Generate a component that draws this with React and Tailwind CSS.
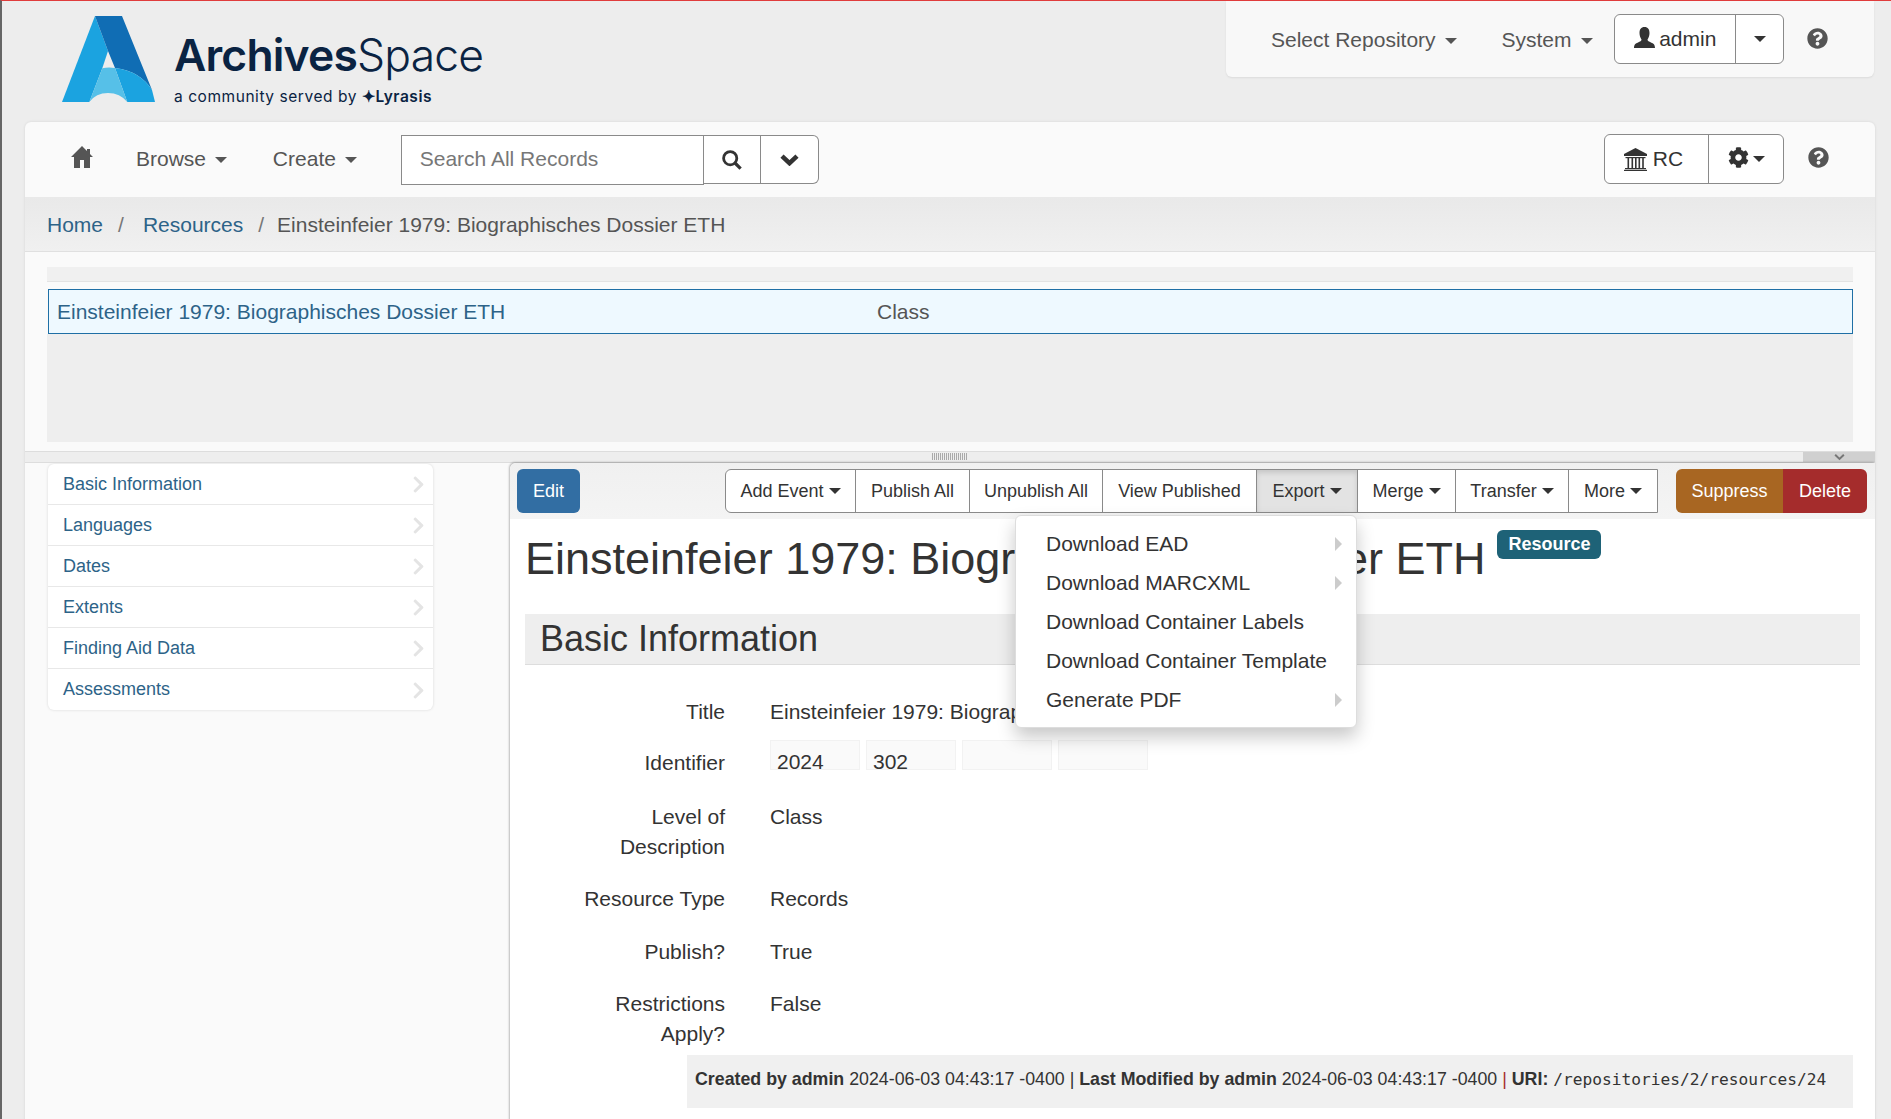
import React from "react";
import { FaChevronRight, FaQuestionCircle, FaCog } from "react-icons/fa";

const Caret = ({ className = "" }) => (
  <span className={"inline-block w-0 h-0 border-x-[6px] border-x-transparent border-t-[6px] border-t-current align-middle " + className} />
);

const HomeIcon = () => (
  <svg width="22" height="22" viewBox="0 0 22 22" className="shrink-0" fill="#555">
    <path d="M0 11 L11 0 L16 5 L16 3 L19 3 L19 8 L22 11 L19 11 L19 22 L13 22 L13 14 L9 14 L9 22 L3 22 L3 11 Z" />
  </svg>
);

const UserIcon = () => (
  <svg width="21" height="21" viewBox="0 0 21 21" className="shrink-0 mb-[3px]" fill="#333">
    <path d="M10.5 0 C14 0 15.5 2.5 15.5 6 C15.5 9 14.5 11 13.5 12.5 C13.5 14 15 14.6 17 15.4 C19.5 16.4 21 17.5 21 21 L0 21 C0 17.5 1.5 16.4 4 15.4 C6 14.6 7.5 14 7.5 12.5 C6.5 11 5.5 9 5.5 6 C5.5 2.5 7 0 10.5 0 Z" />
  </svg>
);

const BankIcon = () => (
  <svg width="23" height="23" viewBox="0 0 23 23" className="shrink-0" fill="#333">
    <path d="M11.5 0 L23 6 L23 8 L0 8 L0 6 Z" />
    <rect x="1.5" y="9" width="20" height="1.2" />
    <rect x="3.5" y="10" width="1.6" height="10" />
    <rect x="7.5" y="10" width="1.6" height="10" />
    <rect x="11" y="10" width="1.6" height="10" />
    <rect x="14.5" y="10" width="1.6" height="10" />
    <rect x="18.2" y="10" width="1.6" height="10" />
    <rect x="1" y="20" width="21" height="1.2" />
    <rect x="0" y="21.8" width="23" height="1.2" />
  </svg>
);

const SearchIcon = () => (
  <svg width="20" height="20" viewBox="0 0 20 20" fill="none" stroke="#333">
    <circle cx="8.2" cy="8.2" r="6.6" strokeWidth="2.8" />
    <path d="M13 13 L18.6 18.6" strokeWidth="3.2" />
  </svg>
);

const ChevronIcon = ({ size = 19, color = "#333", sw = 4.6 }) => (
  <svg width={size} height={size * 0.7} viewBox="0 0 19 13" fill="none" stroke={color} strokeWidth={sw}>
    <path d="M2 3 L9.5 10 L17 3" />
  </svg>
);

function Logo() {
  return (
    <div className="flex items-start">
      <svg width="93" height="86" viewBox="0 0 93 86" className="shrink-0">
        <polygon points="0,86 33,0 46,35 40.3,52.3 27.3,86" fill="#1ba3e0" />
        <path d="M33 0 L60 0 L90 74 Q78 55 53 52 L46 35 Z" fill="#106db4" />
        <path d="M53 52 Q78 55 90 74 L93 86 L65.3 86 Z" fill="#1ba3e0" />
        <path d="M40.3 52.3 Q46 51 53 52 L65.3 86 Q58 77 46 77 Q34 77 27.3 86 Z" fill="#56c0e8" />
      </svg>
      <div className="ml-[19px] mt-[14px] text-[#0a2342] font-['Inter',sans-serif]">
        <div className="text-[44.4px] leading-[50px] tracking-[-0.8px]">
          <span className="font-semibold">Archives</span><span className="font-light">Space</span>
        </div>
        <div className="text-[15.5px] leading-[20px] mt-[7px] tracking-[0.55px]">
          a community served by <span className="font-semibold">✦Lyrasis</span>
        </div>
      </div>
    </div>
  );
}

function Top() {
  return (
    <div className="flex h-[121px] items-start justify-between pl-[60px] pr-[17px]">
      <div className="mt-[15px]"><Logo /></div>
      <div className="w-[648px] h-[76px] bg-[#f8f8f8] rounded-b-md shadow-[0_1px_2px_rgba(0,0,0,0.08)] flex items-start text-[#555]">
        <span className="ml-[45px] mt-[24px] leading-[30px]">Select Repository <Caret className="ml-[4px]" /></span>
        <span className="ml-[44px] mt-[24px] leading-[30px]">System <Caret className="ml-[4px]" /></span>
        <div className="ml-[21px] mt-[13px] flex h-[50px] w-[170px] bg-white border-[1.5px] border-[#8a8a8a] rounded-md text-[#333]">
          <span className="w-[121px] flex items-center justify-center gap-[4px] border-r-[1.5px] border-[#8a8a8a]"><UserIcon />admin</span>
          <span className="flex-1 flex items-center justify-center"><Caret /></span>
        </div>
        <FaQuestionCircle className="ml-[23px] mt-[27px] text-[21px] text-[#555]" />
      </div>
    </div>
  );
}

function Nav() {
  return (
    <div className="h-[75px] flex items-start text-[#555] rounded-t-md">
      <div className="ml-[46px] mt-[24px]"><HomeIcon /></div>
      <span className="ml-[43px] mt-[22px] leading-[30px]">Browse <Caret className="ml-[3px]" /></span>
      <span className="ml-[46px] mt-[22px] leading-[30px]">Create <Caret className="ml-[3px]" /></span>
      <div className="ml-[44px] mt-[13px] flex h-[50px]">
        <div className="w-[303px] h-[50px] bg-white border-[1.5px] border-[#8a8a8a] pl-[18px] leading-[45px] text-[#777]">Search All Records</div>
        <div className="w-[57px] h-[49px] bg-white border-y-[1.5px] border-r-[1.5px] border-[#8a8a8a] flex items-center justify-center"><SearchIcon /></div>
        <div className="w-[58px] h-[49px] bg-white border-y-[1.5px] border-r-[1.5px] border-[#8a8a8a] rounded-r-md flex items-center justify-center"><ChevronIcon /></div>
      </div>
      <div className="ml-auto mt-[12px] flex h-[50px] w-[180px] bg-white border-[1.5px] border-[#8a8a8a] rounded-md text-[#333]">
        <span className="w-[104px] pr-[6px] flex items-center justify-center gap-[6px] border-r-[1.5px] border-[#8a8a8a]"><BankIcon />RC</span>
        <span className="flex-1 flex items-center justify-center gap-[4px]"><FaCog className="text-[21px] mb-[3px]" /><Caret /></span>
      </div>
      <FaQuestionCircle className="ml-[24px] mr-[46px] mt-[25px] text-[21px] text-[#555] shrink-0" />
    </div>
  );
}

function Breadcrumb() {
  return (
    <div className="h-[55px] bg-gradient-to-b from-[#e9e9e9] to-[#f0f0f0] border-b-[1.5px] border-[#e0e0e0] pl-[22px] leading-[55px] text-[#555] whitespace-nowrap flex">
      <span className="text-[#2d6388]">Home</span>
      <span className="text-[#777] ml-[15px]">/</span>
      <span className="text-[#2d6388] ml-[19px]">Resources</span>
      <span className="text-[#777] ml-[15px]">/</span>
      <span className="ml-[13px]">Einsteinfeier 1979: Biographisches Dossier ETH</span>
    </div>
  );
}

function Tree() {
  return (
    <div className="h-[199px] pt-[15px] pl-[23px] pr-[22px]">
      <div className="h-[15px] -ml-[1px] bg-[#f0f0f0] border-b-[1.5px] border-[#e3e3e3]" />
      <div className="mt-[7px] h-[45px] bg-[#eef9ff] border-[1.5px] border-[#1f6fa5] flex items-center text-[#2d6388] pl-[8px]">
        <span className="w-[820px]">Einsteinfeier 1979: Biographisches Dossier ETH</span>
        <span className="text-[#555]">Class</span>
      </div>
      <div className="h-[108px] -ml-[1px] bg-[#eee]" />
    </div>
  );
}

function Splitter() {
  return (
    <div className="h-[12px] bg-[#eee] border-y-[1.5px] border-[#ddd] relative flex justify-center">
      <div className="mt-[1px] w-[36px] h-[7px] bg-[repeating-linear-gradient(90deg,#aaa_0_1px,transparent_1px_2px)]" />
      <div className="absolute right-0 top-0 bottom-0 w-[72px] bg-[#d0d0d0] flex items-center justify-center">
        <ChevronIcon size={11} color="#777" sw={3.5} />
      </div>
    </div>
  );
}

const sideItems = ["Basic Information", "Languages", "Dates", "Extents", "Finding Aid Data", "Assessments"];

function Sidebar() {
  return (
    <div className="w-[385px] ml-[23px] mr-[77px] shrink-0 pt-[1px]">
      <div className="bg-white rounded-md shadow-[0_0_3px_rgba(0,0,0,0.14)] text-[18px] text-[#2d6388]">
        {sideItems.map((s, i) => (
          <div key={s} className={"h-[41px] pl-[15px] pr-[5px] flex items-center justify-between " + (i < 5 ? "border-b-[1.5px] border-[#e8e8e8]" : "")}>
            <span>{s}</span>
            <FaChevronRight className="text-[19px] text-[#e4e4e4] mt-[1px]" />
          </div>
        ))}
      </div>
    </div>
  );
}

const Btn = ({ children, w, active }) => (
  <span className={"flex items-center justify-center gap-[5px] border-r-[1.5px] border-[#8a8a8a] last:border-r-0 " + (active ? "bg-[#e3e3e3] shadow-[inset_0_3px_5px_rgba(0,0,0,0.125)]" : "")} style={{ width: w }}>
    {children}
  </span>
);

const SmallCaret = () => <Caret className="!border-x-[6px] !border-t-[6px]" />;

function Toolbar() {
  return (
    <div className="h-[56px] bg-gradient-to-b from-[#f0f0f0] to-[#f4f4f4] flex items-start pt-[6px] pl-[7px] text-[18px] rounded-tl-md">
      <div className="w-[63px] h-[44px] bg-[#326ea3] text-white rounded-md flex items-center justify-center">Edit</div>
      <div className="ml-[145px] flex h-[44px] bg-white border-[1.5px] border-[#8a8a8a] rounded-l-md text-[#333]">
        <Btn w={130}>Add Event <SmallCaret /></Btn>
        <Btn w={114}>Publish All</Btn>
        <Btn w={133}>Unpublish All</Btn>
        <Btn w={154}>View Published</Btn>
        <Btn w={101} active>Export <SmallCaret /></Btn>
        <Btn w={98}>Merge <SmallCaret /></Btn>
        <Btn w={113}>Transfer <SmallCaret /></Btn>
        <Btn w={88}>More <SmallCaret /></Btn>
      </div>
      <div className="ml-[18px] flex h-[44px] text-white">
        <span className="w-[107px] bg-[#a86622] rounded-l-md flex items-center justify-center">Suppress</span>
        <span className="w-[84px] bg-[#a52c2c] rounded-r-md flex items-center justify-center">Delete</span>
      </div>
    </div>
  );
}

const menu = [["Download EAD", true], ["Download MARCXML", true], ["Download Container Labels", false], ["Download Container Template", false], ["Generate PDF", true]];

function Menu() {
  return (
    <div className="absolute left-[505px] top-[52px] w-[342px] h-[213px] bg-white rounded-md border border-[#ddd] shadow-[0_9px_18px_rgba(0,0,0,0.22)] py-[8px] z-10">
      {menu.map(([t, a]) => (
        <div key={t} className="h-[39px] pl-[30px] pr-[14px] flex items-center justify-between text-[#333]">
          <span>{t}</span>
          {a && <span className="w-0 h-0 border-y-[7px] border-y-transparent border-l-[7px] border-l-[#ccc]" />}
        </div>
      ))}
    </div>
  );
}

const Row = ({ label, mb, children }) => (
  <div className="flex" style={{ marginBottom: mb }}>
    <div className="ml-[45px] w-[170px] text-right">{label}</div>
    <div className="ml-[45px]">{children}</div>
  </div>
);

function Content() {
  return (
    <div className="flex-1 h-[660px] bg-white relative rounded-tl-md shadow-[-1px_-1px_2px_rgba(0,0,0,0.25)] text-[#333]">
      <Toolbar />
      <Menu />
      <div className="px-[15px]">
        <div className="h-[95px] flex items-start">
          <h1 className="text-[45px] leading-[50px] mt-[15px] whitespace-nowrap">Einsteinfeier 1979: Biographisches Dossier ETH</h1>
          <span className="ml-[12px] mt-[11px] h-[29px] w-[104px] bg-[#1e6277] text-white text-[18px] font-bold rounded-md flex items-center justify-center">Resource</span>
        </div>
        <div className="h-[51px] bg-[#eee] border-b-[1.5px] border-[#ddd] pl-[15px] text-[36px] leading-[50px]">Basic Information</div>
      </div>
      <div className="mt-[32px] leading-[30px]">
        <Row label="Title" mb={21}>Einsteinfeier 1979: Biographisches Dossier ETH</Row>
        <Row label="Identifier" mb={24}>
          <div className="flex gap-[6px] -mt-[8px]">
            {["2024", "302", "", ""].map((v, i) => (
              <div key={i} className="w-[90px] h-[30px] bg-[#fafafa] border border-[#f2f2f2] pl-[6px] pt-[9px] leading-[24px]">{v}</div>
            ))}
          </div>
        </Row>
        <Row label="Level of Description" mb={22}>Class</Row>
        <Row label="Resource Type" mb={23}>Records</Row>
        <Row label="Publish?" mb={22}>True</Row>
        <Row label="Restrictions Apply?" mb={6}>False</Row>
      </div>
      <div className="ml-[177px] mr-[22px] h-[53px] bg-[#f0f0f0] pl-[8px] pt-[9px] text-[17.8px] leading-[30px] whitespace-nowrap">
        <b>Created by admin</b> 2024-06-03 04:43:17 -0400 | <b>Last Modified by admin</b> 2024-06-03 04:43:17 -0400 <span className="text-[#a52c2c]">|</span> <b>URI:</b> <span className="font-['DejaVu_Sans_Mono',monospace] text-[16.2px]">/repositories/2/resources/24</span>
      </div>
    </div>
  );
}

export default function App() {
  return (
    <div className="w-[1891px] h-[1119px] overflow-hidden bg-[#ededed] border-t border-t-[#e03c3c] border-l-2 border-l-[#666] font-['Liberation_Sans',Arial,sans-serif] text-[21px] text-[#333]">
      <Top />
      <div className="ml-[23px] mr-[16px] h-[1000px] bg-[#fafafa] rounded-t-md shadow-[0_0_3px_rgba(0,0,0,0.1)]">
        <Nav />
        <Breadcrumb />
        <Tree />
        <Splitter />
        <div className="flex">
          <Sidebar />
          <Content />
        </div>
      </div>
    </div>
  );
}
